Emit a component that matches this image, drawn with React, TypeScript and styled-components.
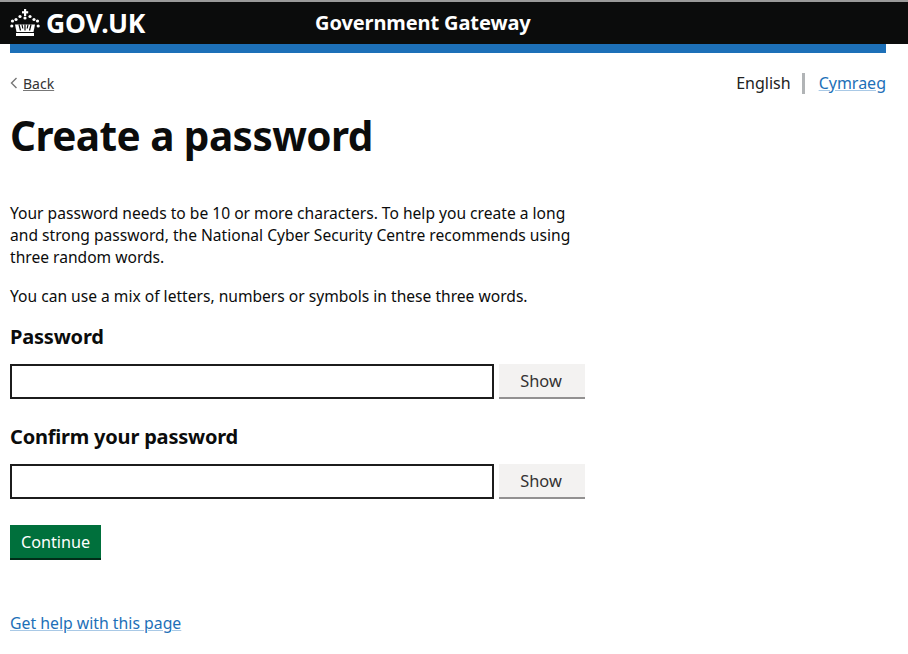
import React from "react";
import styled, { createGlobalStyle } from "styled-components";

const Global = createGlobalStyle`
  html, body { margin: 0; padding: 0; background: #fff; }
  body { font-family: "Noto Sans", "Liberation Sans", sans-serif; color: #0b0c0c; }
`;
const Page = styled.div`width: 908px; height: 654px; overflow: hidden; display: flex; flex-direction: column;`;
const Header = styled.header`
  height: 42px; background: #0b0c0c; border-top: 2px solid #9a9a9a; display: flex; align-items: center; padding-left: 10px; color: #fff; flex: none;
`;
const Logo = styled.div`display: flex; align-items: center; gap: 6px; width: 305px; font: 700 26.5px/34px "Noto Sans", sans-serif; letter-spacing: -0.2px;`;
const Service = styled.div`font: 700 20px/28px "Noto Sans", sans-serif; letter-spacing: -0.1px; margin-bottom: 1px;`;
const Content = styled.main`padding: 0 22px 0 10px; display: flex; flex-direction: column; flex: 1;`;
const BlueBar = styled.div`height: 9px; background: #1d70b8; flex: none;`;
const TopRow = styled.div`display: flex; justify-content: space-between; align-items: center; margin-top: 19px; height: 22px;`;
const BackLink = styled.a`display: flex; align-items: center; gap: 5px; font-size: 14px; color: #333; span { text-decoration: underline; text-decoration-color: #777; }`;
const Lang = styled.div`display: flex; align-items: center; font-size: 16px; color: #222;`;
const LangCurrent = styled.span`padding-right: 11px; border-right: 3px solid #b1b4b6; line-height: 21px;`;
const HelpLink = styled.a`color: #1d70b8; text-decoration: underline; text-decoration-color: #a9c9e6; font-size: 15.8px;`;
const LangLink = styled(HelpLink)`margin-left: 14px; font-size: 16px;`;
const Title = styled.h1`margin: 17px 0 41px; font-size: 40.5px; line-height: 50px; font-weight: 700; letter-spacing: -0.55px;`;
const Form = styled.div`width: 575px; display: flex; flex-direction: column;`;
const Para = styled.p`margin: 0 0 17px; font-size: 15.6px; line-height: 22px; width: 570px;`;
const Label = styled.label`display: block; font-size: 20px; font-weight: 700; line-height: 26px; margin: 0 0 14px; letter-spacing: -0.2px;`;
const FieldRow = styled.div`display: flex; gap: 5px; height: 35px; margin-bottom: 25px;`;
const Input = styled.input`width: 484px; height: 35px; box-sizing: border-box; border: 2px solid #1c1c1c; background: #fff; padding: 0; outline: 0;`;
const ShowButton = styled.button`
  width: 86px; height: 35px; box-sizing: border-box; border: 0; border-bottom: 2px solid #929191; background: #f3f2f1; color: #333; font: 16.4px "Noto Sans", sans-serif; padding: 0 2px 0 0;
`;
const Continue = styled.button`
  width: 91px; height: 35px; box-sizing: border-box; border: 0; border-bottom: 2px solid #002d18; background: #00703c; color: #fff; font: 16.2px "Noto Sans", sans-serif; padding: 0; align-self: flex-start; margin-top: 1px;
`;
const Help = styled.div`margin-top: 52px;`;

const Crown = () => (
  <svg width="30" height="28" viewBox="0 0 30 28" aria-hidden="true">
    <g fill="#fff">
      <rect x="14" y="0" width="2.2" height="7" />
      <rect x="12" y="2.200" width="6.200" height="2.200" />
      <circle cx="15" cy="9" r="1.600" />
      <circle cx="10" cy="7.500" r="1.600" /><circle cx="20" cy="7.500" r="1.600" />
      <circle cx="6" cy="10.500" r="1.600" /><circle cx="24" cy="10.500" r="1.600" />
      <circle cx="2.500" cy="12" r="1.600" /><circle cx="27.500" cy="12" r="1.600" />
      <circle cx="1.800" cy="17" r="1.600" /><circle cx="28.200" cy="17" r="1.600" />
      <path d="M5 15.500h20l-1.500 7.500h-17z" />
      <rect x="6" y="24" width="18" height="3" />
    </g>
    <path d="M9 15.500l1.500 6M21 15.500l-1.500 6M15 15.500v6M12 15.500l.8 4M18 15.500l-.8 4" stroke="#0b0c0c" strokeWidth="1.200" fill="none" />
  </svg>
);

export default function App() {
  return (
    <Page>
      <Global />
      <Header>
        <Logo><Crown />GOV.UK</Logo>
        <Service>Government Gateway</Service>
      </Header>
      <Content>
        <BlueBar />
        <TopRow>
          <BackLink>
            <svg width="8" height="12" viewBox="0 0 8 12" fill="none" stroke="#777" strokeWidth="1.4"><path d="M6.500 1 1.500 6l5 5" /></svg>
            <span>Back</span>
          </BackLink>
          <Lang>
            <LangCurrent>English</LangCurrent>
            <LangLink>Cymraeg</LangLink>
          </Lang>
        </TopRow>
        <Title>Create a password</Title>
        <Form>
          <Para>Your password needs to be 10 or more characters. To help you create a long and strong password, the National Cyber Security Centre recommends using three random words.</Para>
          <Para>You can use a mix of letters, numbers or symbols in these three words.</Para>
          <Label>Password</Label>
          <FieldRow><Input type="password" /><ShowButton>Show</ShowButton></FieldRow>
          <Label>Confirm your password</Label>
          <FieldRow><Input type="password" /><ShowButton>Show</ShowButton></FieldRow>
          <Continue>Continue</Continue>
        </Form>
        <Help><HelpLink>Get help with this page</HelpLink></Help>
      </Content>
    </Page>
  );
}
